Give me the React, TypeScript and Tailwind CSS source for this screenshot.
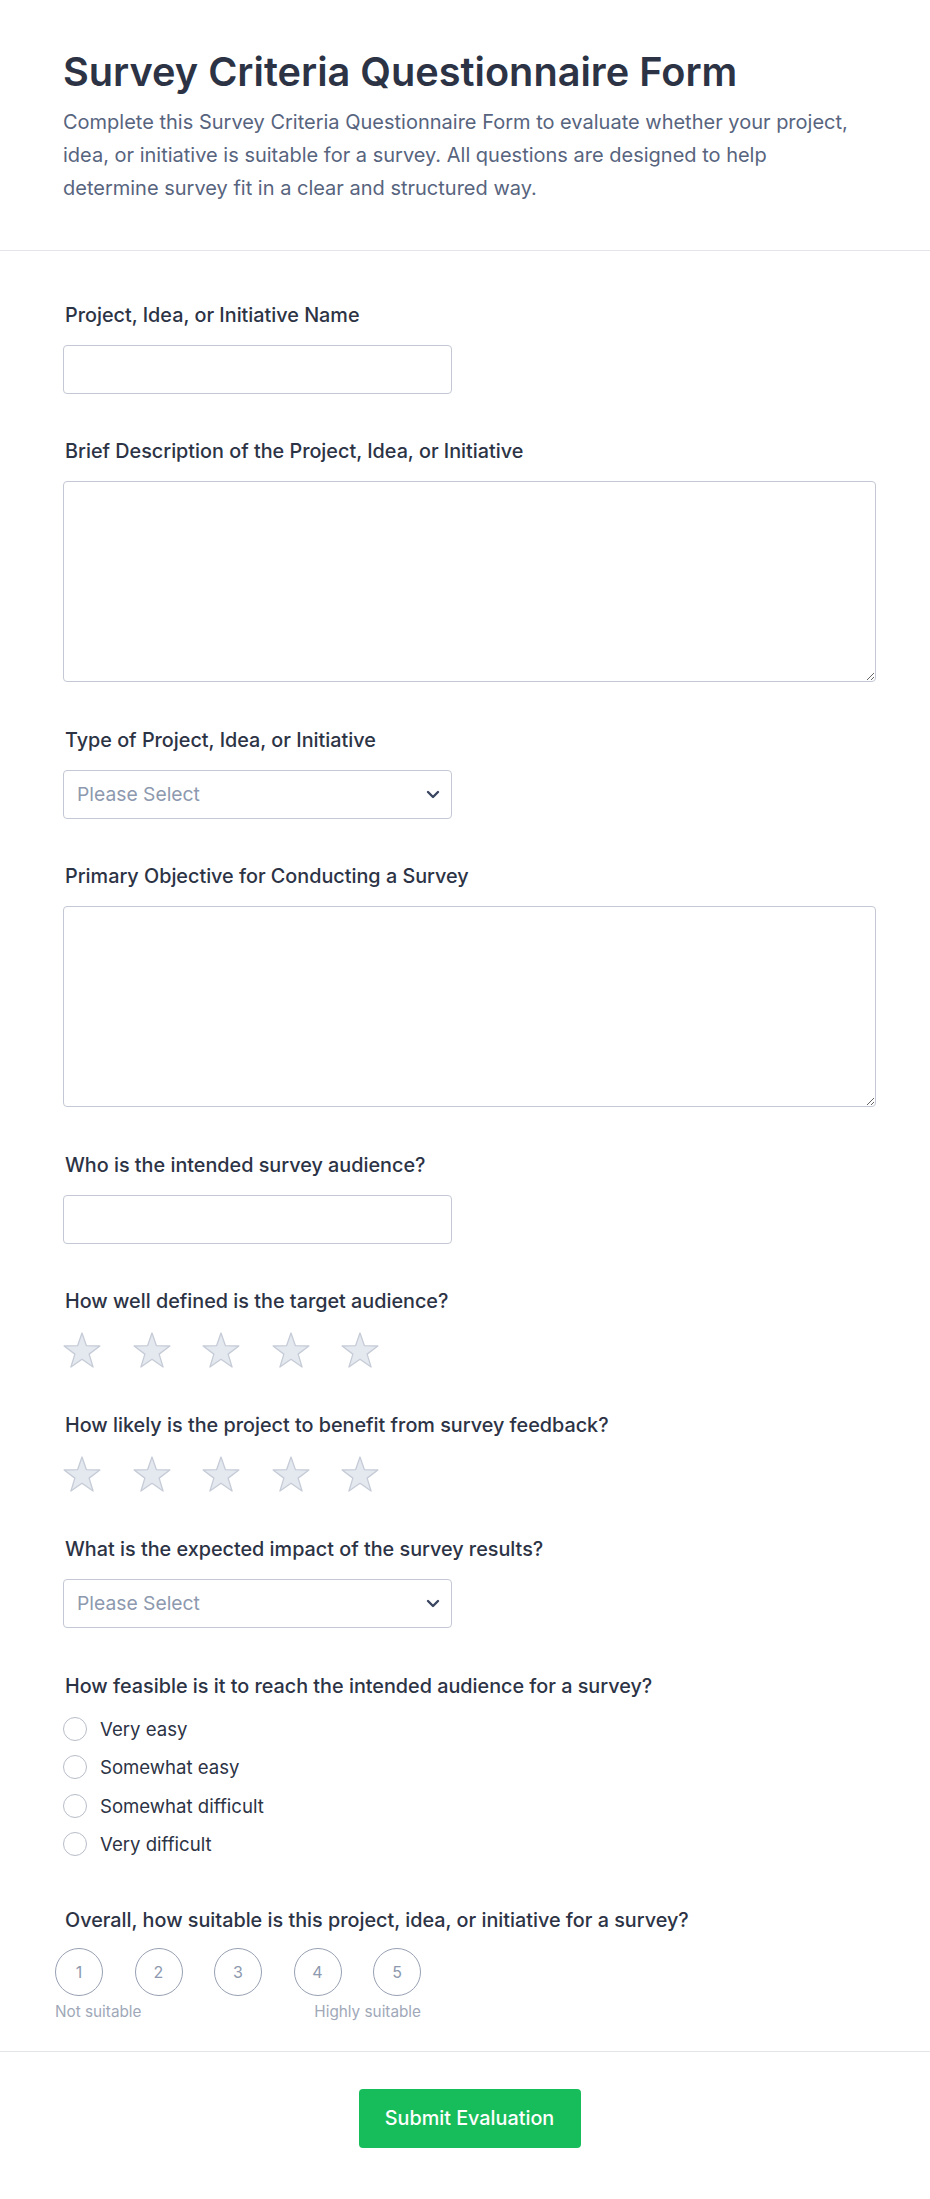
import React from "react";

function Label({ children }: { children: React.ReactNode }) {
  return (
    <label className="block pl-[2px] text-[19.8px] leading-[30px] font-medium text-[#2c3345]">
      {children}
    </label>
  );
}

function TextInput() {
  return (
    <input
      type="text"
      className="mt-[15px] block w-[389px] h-[49px] rounded-[4px] border border-[#c3c8d4] bg-white px-4 outline-none"
    />
  );
}

function TextArea() {
  return (
    <textarea className="mt-[15px] block w-full h-[201px] rounded-[4px] border border-[#c3c8d4] bg-white px-4 py-3 outline-none" />
  );
}

function SelectBox() {
  return (
    <div className="mt-[15px] flex w-[389px] h-[49px] items-center justify-between rounded-[4px] border border-[#c3c8d4] bg-white pl-[13px] pr-[11px]">
      <span className="text-[19.3px] text-[#8d99ae]">Please Select</span>
      <svg width="14" height="9" viewBox="0 0 14 9" fill="none">
        <polyline
          points="2,2 7,7 12,2"
          stroke="#3a4660"
          strokeWidth="2.4"
          strokeLinecap="round"
          strokeLinejoin="round"
        />
      </svg>
    </div>
  );
}

function Star() {
  return (
    <svg width="38" height="36" viewBox="0 0 38 36">
      <polygon
        points="19,1 23.42,13.72 36.88,13.99 26.15,22.12 30.05,35.01 19,27.32 7.95,35.01 11.85,22.12 1.12,13.99 14.58,13.72"
        fill="#e4e8ef"
        stroke="#c6ccd7"
        strokeWidth="1.3"
        strokeLinejoin="round"
      />
    </svg>
  );
}

function Stars() {
  return (
    <div className="mt-[15.5px] flex gap-[31.5px]">
      {[1, 2, 3, 4, 5].map((i) => (
        <Star key={i} />
      ))}
    </div>
  );
}

export default function App() {
  const radios = ["Very easy", "Somewhat easy", "Somewhat difficult", "Very difficult"];
  return (
    <div className="w-full bg-white font-[Inter,sans-serif] text-[#2c3345]">
      <header className="border-b border-[#e3e5ea] pl-[63px] pr-[40px] pt-[50.5px] pb-[45px]">
        <h1 className="text-[39.7px] leading-[43px] font-semibold text-[#2c3345]">
          Survey Criteria Questionnaire Form
        </h1>
        <p className="mt-[12px] text-[20px] leading-[33px] text-[#57647e]">
          Complete this Survey Criteria Questionnaire Form to evaluate whether your project,
          <br />
          idea, or initiative is suitable for a survey. All questions are designed to help
          <br />
          determine survey fit in a clear and structured way.
        </p>
      </header>

      <main className="flex flex-col gap-[42.5px] pl-[63px] pr-[54px] pt-[49px] pb-[29px]">
        <div>
          <Label>Project, Idea, or Initiative Name</Label>
          <TextInput />
        </div>
        <div>
          <Label>Brief Description of the Project, Idea, or Initiative</Label>
          <TextArea />
        </div>
        <div>
          <Label>Type of Project, Idea, or Initiative</Label>
          <SelectBox />
        </div>
        <div>
          <Label>Primary Objective for Conducting a Survey</Label>
          <TextArea />
        </div>
        <div>
          <Label>Who is the intended survey audience?</Label>
          <TextInput />
        </div>
        <div>
          <Label>How well defined is the target audience?</Label>
          <Stars />
        </div>
        <div>
          <Label>How likely is the project to benefit from survey feedback?</Label>
          <Stars />
        </div>
        <div>
          <Label>What is the expected impact of the survey results?</Label>
          <SelectBox />
        </div>
        <div className="pb-[6px]">
          <Label>How feasible is it to reach the intended audience for a survey?</Label>
          <div className="mt-[16.5px] flex flex-col gap-[14.4px]">
            {radios.map((r) => (
              <div key={r} className="flex items-center gap-[13px]">
                <span className="block w-6 h-6 rounded-full border border-[#b8bdc9] bg-white" />
                <span className="text-[18.6px] leading-[24px] text-[#2c3345]">{r}</span>
              </div>
            ))}
          </div>
        </div>
        <div>
          <Label>Overall, how suitable is this project, idea, or initiative for a survey?</Label>
          <div className="mt-[13.5px] ml-[-8px] w-[366px]">
            <div className="flex justify-between">
              {[1, 2, 3, 4, 5].map((n) => (
                <div
                  key={n}
                  className="flex w-12 h-12 items-center justify-center rounded-full border border-[#98a1b3] text-[16px] text-[#8d99ae]"
                >
                  {n}
                </div>
              ))}
            </div>
            <div className="mt-[6px] flex justify-between text-[15.3px] leading-[20px] text-[#a0a8b8]">
              <span>Not suitable</span>
              <span>Highly suitable</span>
            </div>
          </div>
        </div>
      </main>

      <footer className="flex justify-center border-t border-[#e3e5ea] pl-[63px] pr-[54px] pt-[37px] pb-[50px]">
        <button className="w-[222px] h-[59px] rounded-[4px] bg-[#18bd5b] text-[19.8px] font-medium text-white">
          Submit Evaluation
        </button>
      </footer>
    </div>
  );
}
